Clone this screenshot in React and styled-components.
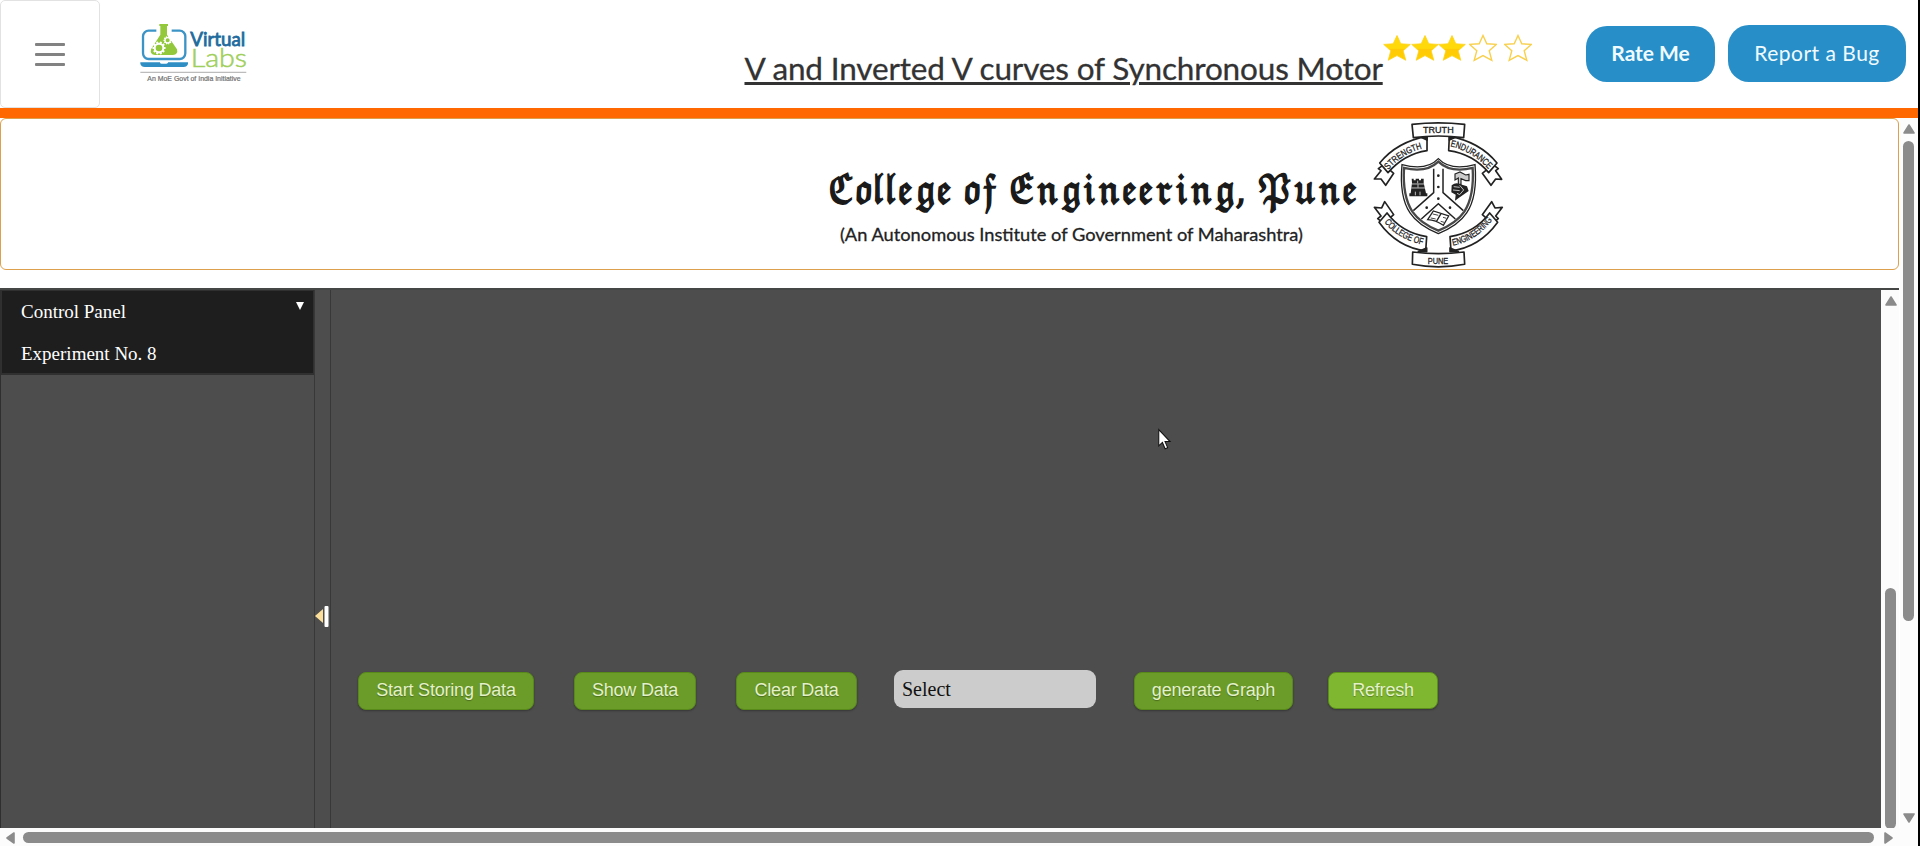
import React from 'react';
import styled, { createGlobalStyle } from 'styled-components';

const Global = createGlobalStyle`
  * { box-sizing: border-box; }
  body { margin: 0; background: #fff; overflow: hidden; }
`;

const Page = styled.div`
  width: 1920px;
  height: 846px;
  border-right: 2px solid #000;
  background: #fff;
  display: flex;
  flex-direction: column;
  overflow: hidden;
  position: relative;
`;

const Header = styled.header`
  height: 118px;
  flex: none;
  border-bottom: 10px solid #ff6700;
  display: flex;
  align-items: flex-start;
`;

const MenuButton = styled.button`
  width: 100px;
  height: 108px;
  padding: 0;
  border: 1px solid #e2e2e2;
  border-radius: 5px;
  background: #fff;
  display: flex;
  flex-direction: column;
  align-items: center;
  justify-content: center;
  gap: 7px;
`;

const MenuLine = styled.span`
  width: 30px;
  height: 3px;
  border-radius: 1px;
  background: #828282;
`;

const Logo = styled.svg`
  flex: none;
  width: 113.3px;
  height: 63.3px;
  margin: 20px 0 0 36.7px;
`;

const Title = styled.h1`
  margin: 48px 0 0 494.5px;
  width: 639px;
  flex: none;
  font: 400 31.5px/40px Lato, sans-serif;
  letter-spacing: -0.15px;
  -webkit-text-stroke: 0.3px #333;
  color: #333;
  white-space: nowrap;
  text-decoration: underline;
  text-decoration-thickness: 3px;
  text-underline-offset: 2px;
`;

const Rating = styled.div`
  display: flex;
  width: 202.5px;
  flex: none;
  padding-top: 34px;
`;

const StarSvg = styled.svg`
  width: 28px;
  height: 28px;
  flex: none;
  margin-left: ${(p) => p.$gap}px;
`;

const Actions = styled.div`
  display: flex;
  align-items: flex-end;
  gap: 13px;
  padding-top: 25px;
`;

const ActionButton = styled.button`
  width: ${(p) => p.$w}px;
  height: ${(p) => p.$h}px;
  padding: 0 0 2px;
  border: 0;
  border-radius: 21px;
  background: #288ec8;
  color: #f0fbff;
  font: ${(p) => p.$weight} 21px/24px Lato, sans-serif;
  letter-spacing: ${(p) => p.$spacing}px;
  white-space: nowrap;
`;

const Viewport = styled.div`
  flex: 1;
  min-height: 0;
  display: flex;
`;

const Content = styled.main`
  width: 1900px;
  flex: none;
  display: flex;
  flex-direction: column;
`;

const Banner = styled.section`
  width: 1899px;
  height: 152px;
  flex: none;
  border: 1px solid #dda04c;
  border-radius: 6px;
  display: flex;
  align-items: flex-start;
  padding: 1px 0 0 819px;
`;

const Wordmark = styled.svg`
  width: 550px;
  height: 148px;
  flex: none;
  overflow: visible;
`;

const Emblem = styled.svg`
  width: 130.7px;
  height: 148.3px;
  flex: none;
  margin-left: 3.3px;
`;

const Workspace = styled.section`
  width: 1899px;
  margin-top: 18px;
  flex: 1;
  min-height: 0;
  border-top: 2px solid #454746;
  display: flex;
`;

const Sidebar = styled.aside`
  width: 315px;
  background: #4d4d4d;
  border-left: 1px solid #2f2f2f;
  border-right: 1px solid #383838;
`;

const PanelHead = styled.div`
  height: 85px;
  background: #1e1e1e;
  border: 1px solid #303030;
  border-width: 1px 1px 2px;
  padding: 9px 9px 0 19px;
  color: #fff;
  font: 19px/24px "Liberation Serif", serif;
  display: flex;
  justify-content: space-between;
`;

const PanelItems = styled.div`
  display: flex;
  flex-direction: column;
  gap: 18px;
`;

const Caret = styled.span`
  width: 0;
  height: 0;
  margin-top: 1.5px;
  border: 4.5px solid transparent;
  border-top: 8px solid #fff;
  border-bottom: 0;
`;

const Splitter = styled.div`
  width: 16px;
  background: #4d4d4d;
  border-right: 1px solid #383838;
  display: flex;
  align-items: flex-start;
  padding-top: 316px;
`;

const SplitIcon = styled.svg`
  width: 15px;
  height: 22px;
`;

const Canvas = styled.div`
  width: 1550px;
  background: #4d4d4d;
  padding: 380px 0 0 27px;
`;

const Controls = styled.div`
  display: flex;
  align-items: flex-start;
`;

const GreenButton = styled.button`
  width: ${(p) => p.$w}px;
  height: ${(p) => (p.$light ? 37 : 38)}px;
  margin: 2px 0 0 ${(p) => p.$gap || 0}px;
  padding: 0 0 2px;
  border: 1px solid ${(p) => (p.$light ? '#5c8e1c' : '#588a1a')};
  border-radius: 8px;
  background: ${(p) => (p.$light ? '#7fb731' : '#6b9c29')};
  box-shadow: 0 1px 2px rgba(0, 0, 0, 0.3);
  color: #e3f1c8;
  font: 18px/20px "Liberation Sans", sans-serif;
  letter-spacing: -0.2px;
  text-shadow: 0 1px 1px rgba(0, 0, 0, 0.3);
  white-space: nowrap;
`;

const SelectBox = styled.div`
  width: 202px;
  height: 38px;
  margin-left: 37px;
  border-radius: 9px;
  background: #ccc;
  padding-left: 8px;
  color: #111;
  font: 20px/39px "Liberation Serif", serif;
`;

const VTrack = styled.div`
  width: ${(p) => p.$w}px;
  flex: none;
  background: #fcfcfc;
  display: flex;
  flex-direction: column;
  align-items: flex-start;
  padding: ${(p) => p.$pad};
`;

const HTrack = styled.div`
  height: 18px;
  flex: none;
  background: #fcfcfc;
  display: flex;
  align-items: flex-start;
  padding: 4px 0 0 6px;
`;

const Thumb = styled.div`
  flex: none;
  width: ${(p) => p.$w}px;
  height: ${(p) => p.$h}px;
  margin: ${(p) => p.$m};
  border-radius: 6px;
  background: #8b8b8b;
`;

const ArrowSvg = styled.svg`
  flex: none;
  width: ${(p) => p.$w}px;
  height: ${(p) => p.$h}px;
`;

const Pointer = styled.svg`
  position: absolute;
  left: 1157px;
  top: 428px;
  width: 15px;
  height: 23px;
`;

const arrowShapes = {
  up: [12, 10, 'M6 1 L11 9 H1Z'],
  down: [12, 10, 'M6 9 L11 1 H1Z'],
  left: [9, 12, 'M1 6 L8 1 V11Z'],
  right: [9, 12, 'M8 6 L1 1 V11Z'],
};

function Arrow({ dir }) {
  const [w, h, d] = arrowShapes[dir];
  return (
    <ArrowSvg $w={w} $h={h} viewBox={`0 0 ${w} ${h}`}>
      <path d={d} fill="#8b8b8b" stroke="#8b8b8b" strokeWidth="1.6" strokeLinejoin="round" />
    </ArrowSvg>
  );
}

function Star({ filled, gap }) {
  return (
    <StarSvg viewBox="0 0 28 28" $gap={gap}>
      <defs>
        <linearGradient id="starFill" x1="0" y1="0" x2="0" y2="1">
          <stop offset="0.52" stopColor="#ffd90a" />
          <stop offset="0.56" stopColor="#ffc907" />
          <stop offset="1" stopColor="#ffd000" />
        </linearGradient>
      </defs>
      <path
        d="M14 1.5 L17.8 9.8 L27.3 10.4 L20.2 16.8 L22.8 26.3 L14 21.6 L5.2 26.3 L7.8 16.8 L0.7 10.4 L10.2 9.8Z"
        fill={filled ? 'url(#starFill)' : '#fff'}
        stroke={filled ? '#ffd21a' : '#f8d04c'}
        strokeWidth={filled ? 0.8 : 1.4}
      />
    </StarSvg>
  );
}

const teeth = Array.from({ length: 10 }, (_, i) => i * 36);

function Gear({ x, y, r, w }) {
  return (
    <g transform={`translate(${x} ${y})`} stroke="#fff" fill="none">
      <circle r={r} strokeWidth={w} />
      {teeth.map((a) => (
        <line key={a} x1={r} x2={r + w * 1.1} strokeWidth={w} transform={`rotate(${a})`} />
      ))}
    </g>
  );
}

function VirtualLabsLogo() {
  return (
    <Logo viewBox="410 60 340 190">
      <rect x="428" y="92" width="127" height="85" rx="17" fill="#fff" stroke="#3c94c6" strokeWidth="7" />
      <path d="M468 84 H514 V104 H468Z" fill="#fff" />
      <path d="M420 187 H563 V192 Q560 201 550 201 H433 Q423 201 420 192Z" fill="#2f8fc5" />
      <path d="M479 184 H503 V188 Q501 191 497 191 H484 Q480 191 479 188Z" fill="#fff" />
      <path d="M477 72 H503 V78 H500 V104 L530 148 Q534 164 518 165 H464 Q448 164 452 148 L480 104 V78 H477Z" fill="#93c83d" />
      <Gear x={476} y={144} r={13} w={6} />
      <Gear x={502} y={121} r={8} w={4} />
      <g fontFamily="Lato, sans-serif">
        <text x="570" y="137" fontSize="60" fill="#206b9e" stroke="#206b9e" strokeWidth="2.5" textLength="165" lengthAdjust="spacingAndGlyphs">Virtual</text>
        <text x="571" y="200" fontSize="74" fontWeight="300" fill="#a0cf5b" stroke="#a0cf5b" strokeWidth="1.5" textLength="169" lengthAdjust="spacingAndGlyphs">Labs</text>
      </g>
      <path d="M420 217 H738" stroke="#9a9a9a" strokeWidth="2.5" />
      <text x="441" y="243" fontSize="22" fontFamily="Liberation Sans, sans-serif" fill="#707070" stroke="#707070" strokeWidth="0.6" textLength="280" lengthAdjust="spacingAndGlyphs">An MoE Govt of India Initiative</text>
    </Logo>
  );
}

function CollegeWordmark() {
  return (
    <Wordmark viewBox="820 120 550 148">
      <text x="828" y="203" fontSize="38" fontFamily="DejaVu Math TeX Gyre, DejaVu Sans, serif" fill="#1a1a1a" stroke="#1a1a1a" strokeWidth="1.7" textLength="530" lengthAdjust="spacingAndGlyphs" aria-label="College of Engineering, Pune">ℭ𝔬𝔩𝔩𝔢𝔤𝔢 𝔬𝔣 𝔈𝔫𝔤𝔦𝔫𝔢𝔢𝔯𝔦𝔫𝔤, 𝔓𝔲𝔫𝔢</text>
      <text x="840" y="241" fontSize="18" fontFamily="Lato, sans-serif" fill="#222" stroke="#222" strokeWidth="0.3" textLength="463" lengthAdjust="spacingAndGlyphs">(An Autonomous Institute of Government of Maharashtra)</text>
    </Wordmark>
  );
}

function CollegeEmblem() {
  return (
    <Emblem viewBox="670 30 392 445">
      <defs>
        <path id="arcStrength" d="M716 180 Q757 130 828 113" />
        <path id="arcEndurance" d="M902 109 Q970 124 1022 184" />
        <path id="arcCollege" d="M704 336 Q742 388 826 406" />
        <path id="arcEngineering" d="M910 407 Q984 392 1032 324" />
      </defs>
      <g fill="#fff" stroke="#222" strokeWidth="5" strokeLinejoin="round">
        <path d="M702 164 L686 176 L694 182 L674 207 L694 207 L708 226 L732 190Z" />
        <path d="M1030 164 L1046 176 L1038 182 L1056 208 L1038 207 L1024 226 L998 190Z" />
        <path d="M702 340 L684 326 L694 318 L674 292 L696 294 L705 275 L732 314Z" />
        <path d="M1028 340 L1046 326 L1038 318 L1058 292 L1036 294 L1026 275 L998 314Z" />
        <path d="M690 159 Q742 95 832 79 V122 Q764 132 715 188Z" />
        <path d="M899 79 Q990 95 1042 159 L1017 188 Q970 132 897 122Z" />
        <path d="M688 337 L712 309 Q756 368 831 380 L828 423 Q742 412 688 337Z" />
        <path d="M1044 337 L1020 309 Q976 368 901 380 L904 423 Q990 412 1044 337Z" />
        <path d="M806 78 L832 90 V78Z M926 78 L899 90 V78Z M806 425 L831 414 V425Z M926 425 L901 414 V425Z" fill="#222" />
        <path d="M787 43 Q866 34 945 43 L942 83 Q866 73 791 83Z" />
        <path d="M789 426 Q866 436 943 426 L945 463 Q866 478 788 463Z" />
      </g>
      <g fill="none" stroke="#222">
        <path d="M866 146 Q830 184 757 164 Q748 260 781 309 Q806 347 866 371 Q926 347 951 309 Q984 260 976 164 Q902 184 866 146Z" strokeWidth="4" fill="#fff" />
        <path d="M866 155 Q830 190 763 174 Q758 258 788 305 Q812 340 866 362 Q920 340 944 305 Q974 258 969 174 Q902 190 866 155Z" strokeWidth="7" stroke="#484848" />
        <path d="M852 176 V248 L791 302 M880 176 V248 L941 302 M815 327 L866 281 L917 327" strokeWidth="4.5" />
      </g>
      <g fill="#222">
        {[[866, 197], [866, 231], [866, 266], [831, 293], [901, 293]].map(([x, y]) => (
          <circle key={`${x}-${y}`} cx={x} cy={y} r="4" />
        ))}
        <path d="M786 206 H792 V211 H798 V206 H808 V211 H814 V206 H822 V219 L829 250 H833 V259 H779 V250 H783 L787 219Z" />
        <path d="M906 226 Q918 216 930 222 L952 229 L957 243 L928 263 L916 272 L918 254 L905 247Z" />
      </g>
      <path d="M916 192 L931 186 L948 195 L958 193 V212 L948 212 L934 206 V224 L926 222 V204 L916 210Z" fill="#ccc" stroke="#222" strokeWidth="3.5" />
      <g stroke="#ddd" strokeWidth="2.5" fill="none">
        <path d="M787 222 H824 M785 234 H827 M797 245 V256 M811 245 V256 M804 212 V220 M805 223 V233" />
        <path d="M912 230 L930 232 M910 240 L930 242 M930 226 L942 240 L930 254 L922 250" />
      </g>
      <path d="M834 329 L851 303 L897 318 L881 346 Q858 330 834 329Z M874 311 L860 335" fill="#fff" stroke="#222" strokeWidth="4" />
      <path d="M849 312 L866 316 M843 324 L858 327 M880 322 L890 325 M873 334 L883 337" stroke="#444" strokeWidth="3" />
      <g fontFamily="Liberation Sans, sans-serif" fontSize="28" fill="#222" stroke="#222" strokeWidth="0.9">
        <text x="820" y="69" fontSize="25" textLength="92" lengthAdjust="spacingAndGlyphs">TRUTH</text>
        <text x="834" y="461" fontSize="26" textLength="62" lengthAdjust="spacingAndGlyphs">PUNE</text>
        <text textLength="122" lengthAdjust="spacingAndGlyphs"><textPath href="#arcStrength">STRENGTH</textPath></text>
        <text textLength="136" lengthAdjust="spacingAndGlyphs"><textPath href="#arcEndurance">ENDURANCE</textPath></text>
        <text textLength="136" lengthAdjust="spacingAndGlyphs"><textPath href="#arcCollege">COLLEGE OF</textPath></text>
        <text textLength="144" lengthAdjust="spacingAndGlyphs"><textPath href="#arcEngineering">ENGINEERING</textPath></text>
      </g>
    </Emblem>
  );
}

export default function App() {
  return (
    <Page>
      <Global />
      <Header>
        <MenuButton aria-label="Menu">
          <MenuLine />
          <MenuLine />
          <MenuLine />
        </MenuButton>
        <VirtualLabsLogo />
        <Title>V and Inverted V curves of Synchronous Motor</Title>
        <Rating>
          <Star filled gap={0} />
          <Star filled gap={-0.5} />
          <Star filled gap={-0.5} />
          <Star gap={3} />
          <Star gap={7} />
        </Rating>
        <Actions>
          <ActionButton $w={129} $h={56} $weight={700} $spacing={-0.05}>Rate Me</ActionButton>
          <ActionButton $w={178} $h={57} $weight={400} $spacing={0.5}>Report a Bug</ActionButton>
        </Actions>
      </Header>
      <Viewport>
        <Content>
          <Banner>
            <CollegeWordmark />
            <CollegeEmblem />
          </Banner>
          <Workspace>
            <Sidebar>
              <PanelHead>
                <PanelItems>
                  <span>Control Panel</span>
                  <span>Experiment No. 8</span>
                </PanelItems>
                <Caret />
              </PanelHead>
            </Sidebar>
            <Splitter>
              <SplitIcon viewBox="0 0 15 22">
                <path d="M0 10 L8 3 V17Z" fill="#fbdf9a" />
                <rect x="9.5" y="0" width="4" height="21" rx="1" fill="#fff" />
              </SplitIcon>
            </Splitter>
            <Canvas>
              <Controls>
                <GreenButton $w={176}>Start Storing Data</GreenButton>
                <GreenButton $w={122} $gap={40}>Show Data</GreenButton>
                <GreenButton $w={121} $gap={40}>Clear Data</GreenButton>
                <SelectBox>Select</SelectBox>
                <GreenButton $w={159} $gap={38}>generate Graph</GreenButton>
                <GreenButton $w={110} $gap={35} $light>Refresh</GreenButton>
              </Controls>
            </Canvas>
            <VTrack $w={18} $pad="6px 0 0 4px">
              <Arrow dir="up" />
              <Thumb $w={11} $h={241} $m="282px 0 0 0" />
            </VTrack>
          </Workspace>
        </Content>
        <VTrack $w={18} $pad="6px 0 0 2.5px">
          <Arrow dir="up" />
          <Thumb $w={11} $h={480} $m="7px 0 192px 0.5px" />
          <Arrow dir="down" />
        </VTrack>
      </Viewport>
      <HTrack>
        <Arrow dir="left" />
        <Thumb $w={1851} $h={11} $m="0 10px 0 8px" />
        <Arrow dir="right" />
      </HTrack>
      <Pointer viewBox="0 0 14 22">
        <path d="M1.5 1.5 V17 L5 13.8 L7.6 19.8 L10 18.8 L7.5 13 H12.3Z" fill="#fff" stroke="#111" strokeWidth="1" />
      </Pointer>
    </Page>
  );
}
